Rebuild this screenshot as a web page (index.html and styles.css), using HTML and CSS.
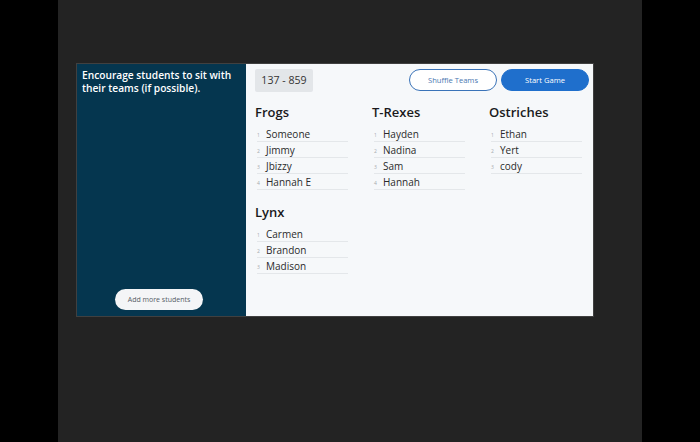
FILE: index.html
```html
<!DOCTYPE html>
<html>
<head>
<meta charset="utf-8">
<link rel="stylesheet" href="styles.css">
</head>
<body>
<div class="stage">
  <div class="panel">
    <aside class="sidebar">
      <p class="hint">Encourage students to sit with their teams (if possible).</p>
      <button class="add-btn">Add more students</button>
    </aside>
    <main class="main">
      <div class="topbar">
        <div class="code">137 - 859</div>
        <div class="actions">
          <button class="btn btn-outline">Shuffle Teams</button>
          <button class="btn btn-primary">Start Game</button>
        </div>
      </div>
      <div class="teams">
        <section class="team">
          <h2>Frogs</h2>
          <ol>
            <li><span class="num">1</span>Someone</li>
            <li><span class="num">2</span>Jimmy</li>
            <li><span class="num">3</span>Jbizzy</li>
            <li><span class="num">4</span>Hannah E</li>
          </ol>
        </section>
        <section class="team">
          <h2>T-Rexes</h2>
          <ol>
            <li><span class="num">1</span>Hayden</li>
            <li><span class="num">2</span>Nadina</li>
            <li><span class="num">3</span>Sam</li>
            <li><span class="num">4</span>Hannah</li>
          </ol>
        </section>
        <section class="team">
          <h2>Ostriches</h2>
          <ol>
            <li><span class="num">1</span>Ethan</li>
            <li><span class="num">2</span>Yert</li>
            <li><span class="num">3</span>cody</li>
          </ol>
        </section>
        <section class="team">
          <h2>Lynx</h2>
          <ol>
            <li><span class="num">1</span>Carmen</li>
            <li><span class="num">2</span>Brandon</li>
            <li><span class="num">3</span>Madison</li>
          </ol>
        </section>
      </div>
    </main>
  </div>
</div>
</body>
</html>
```

FILE: styles.css
```css
* { box-sizing: border-box; }
html, body { margin: 0; padding: 0; background: #000; }
body { font-family: "Open Sans", "Noto Sans", sans-serif; }

.stage {
  width: 584px;
  height: 442px;
  margin-left: 58px;
  background: #232323;
  padding: 64px 0 0 19px;
}

.panel {
  width: 516px;
  height: 252px;
  display: flex;
  box-shadow: 0 0 0 1px rgba(120,120,120,0.35);
}

.sidebar {
  width: 169px;
  background: #05364f;
  display: flex;
  flex-direction: column;
  align-items: center;
  padding: 5px 5px 6px 5px;
}

.hint {
  margin: 0;
  align-self: stretch;
  color: #fff;
  font-size: 10.2px;
  line-height: 13px;
  font-weight: 600;
}

.add-btn {
  margin-top: auto;
  margin-right: 5px;
  width: 88px;
  height: 21px;
  border: 0;
  border-radius: 11px;
  background: #f4f5f7;
  color: #555c66;
  font-family: inherit;
  font-size: 7px;
  padding: 0;
}

.main {
  flex: 1;
  background: #f6f8fa;
  padding: 5px 4px 0 9px;
}

.topbar {
  display: flex;
  justify-content: space-between;
  align-items: flex-start;
}

.code {
  width: 58px;
  height: 23px;
  background: #e3e6e9;
  border-radius: 2px;
  color: #333;
  font-size: 10.6px;
  line-height: 23px;
  text-align: center;
}

.actions {
  display: flex;
  gap: 4px;
}

.btn {
  width: 88px;
  height: 22px;
  border-radius: 11px;
  font-family: inherit;
  font-size: 7.6px;
  padding: 0;
}

.btn-outline {
  background: #fff;
  border: 1px solid #3a73b8;
  color: #4a78b0;
}

.btn-primary {
  background: #1f6fcc;
  border: 1px solid #1f6fcc;
  color: #fff;
}

.teams {
  display: grid;
  grid-template-columns: repeat(3, 93px);
  column-gap: 24px;
  row-gap: 13px;
  margin-top: 11px;
}

.team h2 {
  margin: 0 0 5px 0;
  font-size: 13px;
  line-height: 18px;
  font-weight: 600;
  color: #1a1a1c;
}

.team ol {
  list-style: none;
  margin: 0 0 0 2px;
  padding: 0;
}

.team li {
  height: 16px;
  line-height: 16px;
  font-size: 10px;
  color: #2a2a2a;
  border-bottom: 1px solid #e4e7ea;
  display: flex;
  align-items: center;
}

.num {
  width: 9px;
  font-size: 5px;
  color: #a5a9ad;
  padding-top: 2px;
}
```
